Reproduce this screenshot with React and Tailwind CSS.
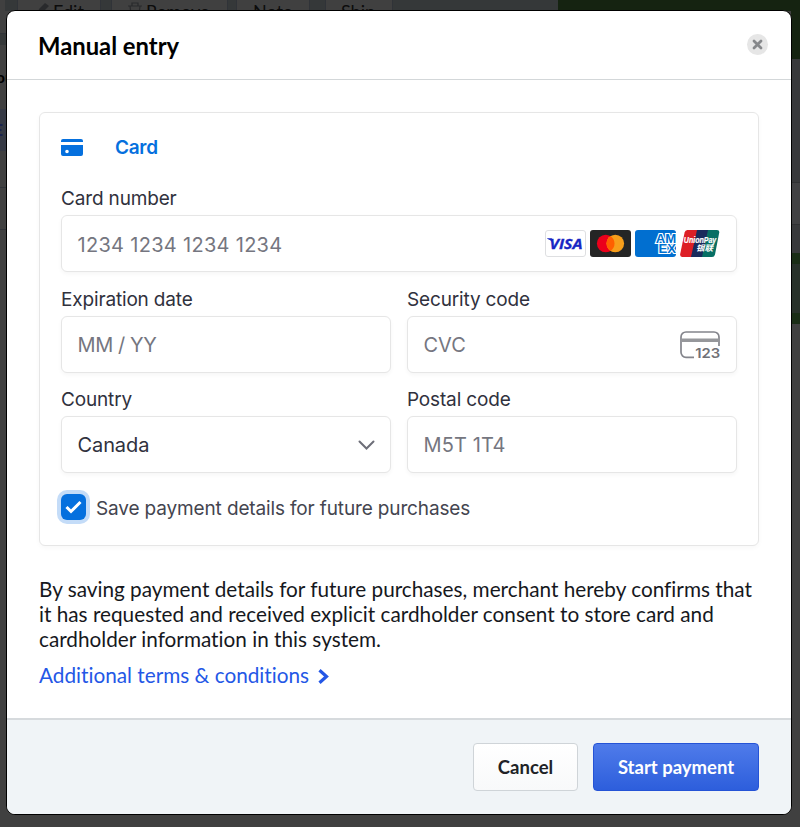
const toolbar = [
  { label: 'Edit', className: 'w-[84px] ml-[17px] pl-[20px]', icon: 'edit' },
  { label: 'Remove', className: 'w-[117px] ml-[10px] pl-[15px]', icon: 'trash' },
  { label: 'Note', className: 'w-[74px] ml-[8px] pl-[16px]' },
  { label: 'Ship', className: 'w-[68px] ml-[15px] pl-[15px]' },
];

function ToolbarIcon({ name }) {
  if (name === 'edit') {
    return (
      <svg className="h-4 w-3 shrink-0" viewBox="0 0 12 16" fill="#292a2c">
        <path d="M0 13l1-4 6-6 4 3-7 7z" />
      </svg>
    );
  }
  return (
    <svg className="h-4 w-4 shrink-0" viewBox="0 0 16 16" fill="none" stroke="#292a2c" strokeWidth="1.2">
      <path d="M1 6h14M5 6V3h6v3M3 6l1 9h8l1-9" />
    </svg>
  );
}

function PageBehind() {
  return (
    <div className="flex h-full flex-col bg-[#404040]">
      <div className="flex h-[11px] shrink-0 bg-[#353839]">
        <div className="h-full w-[5px] bg-[#404040]" />
        <div className="-ml-[5px] flex w-[558px]">
          {toolbar.map((item) => (
            <div
              key={item.label}
              className={`flex h-6 shrink-0 items-start gap-[3px] border-x border-[#303338] bg-[#404040] text-[18px] leading-[22px] text-[#0c0c0c] ${item.className}`}
            >
              {item.icon && <ToolbarIcon name={item.icon} />}
              <span>{item.label}</span>
            </div>
          ))}
        </div>
        <div className="h-full flex-1 bg-[#152311]" />
      </div>
      <div className="flex flex-1 justify-between">
        <div className="w-[7px] overflow-hidden text-base text-black">
          <div className="h-[23px] border-b border-[#303338]" />
          <div className="h-[11px] bg-[#353839]" />
          <div className="flex h-[64px] items-center justify-end font-bold">
            <span className="-mr-[7px]">ou</span>
          </div>
          <div className="flex h-[42px] items-center justify-end bg-[#363a45] font-black text-[#1a2250]">
            <span className="mr-[4px]">E</span>
          </div>
          <div className="h-[37px] border-b border-[#303338]" />
          <div className="h-[42px] border-b border-[#303338]" />
        </div>
        <div className="w-[9px]">
          <div className="h-[48px] bg-[#152311]" />
          <div className="h-[123px] bg-[#38393b]" />
          <div className="h-[43px] border-y border-[#303133] bg-[#414143]" />
          <div className="h-[28px] bg-[#38393b]" />
          <div className="h-[11px] bg-[#1a2d16]" />
          <div className="h-[49px] bg-[#28312a]" />
          <div className="h-[11px] bg-[#1a2d16]" />
        </div>
      </div>
    </div>
  );
}

function Visa() {
  return (
    <svg className="h-[27px] w-[41px]" viewBox="0 0 41 27">
      <rect x="0.5" y="0.5" width="40" height="26" rx="2.5" fill="#fff" stroke="#dedfe1" />
      <path d="M2.200 8.300h4.500l1.800 5.200Q6 9.800 2.200 8.800z" fill="#1726c4" />
      <text x="4.500" y="18.800" fontFamily="Open Sans, sans-serif" fontSize="14.8" fontWeight="700" fontStyle="italic" fill="#1726c4" stroke="#1726c4" strokeWidth="0.3" textLength="33" lengthAdjust="spacingAndGlyphs">
        VISA
      </text>
    </svg>
  );
}

function Mastercard() {
  return (
    <svg className="h-[27px] w-[41px]" viewBox="0 0 41 27">
      <rect width="41" height="27" rx="3" fill="#252525" />
      <circle cx="15.7" cy="13.5" r="8.8" fill="#eb001b" />
      <circle cx="25.3" cy="13.5" r="8.8" fill="#f79e1b" />
      <path d="M20.5 6.1a8.8 8.8 0 0 1 0 14.8a8.8 8.8 0 0 1 0-14.8" fill="#ff5f00" />
    </svg>
  );
}

function Amex() {
  return (
    <svg className="h-[27px] w-[41px]" viewBox="0 0 41 27">
      <defs>
        <clipPath id="amex">
          <rect width="41" height="27" rx="3" />
        </clipPath>
      </defs>
      <g clipPath="url(#amex)">
        <rect width="41" height="27" fill="#016fd0" />
        <g fontFamily="Liberation Sans, sans-serif" fontSize="12" fontWeight="700" fill="#0070d0" stroke="#fff" strokeWidth="2.200" paintOrder="stroke">
          <text x="20.800" y="13.200" textLength="20.500" lengthAdjust="spacingAndGlyphs">AM</text>
          <text x="23.500" y="22.600" textLength="17.500" lengthAdjust="spacingAndGlyphs">EX</text>
        </g>
      </g>
    </svg>
  );
}

function UnionPay() {
  return (
    <svg className="h-[27px] w-[41px]" viewBox="0 0 41 27">
      <path d="M7.4 0h12l-6 27H2Q-.2 27 .2 24L4.600 2.500Q5.200 0 7.400 0z" fill="#dd1f26" />
      <path d="M17 0h12l-6 27H11z" fill="#1a2b5c" />
      <path d="M28 0h9Q39.800 0 39.200 2.800L35 24.500Q34.400 27 32 27H22z" fill="#076f64" />
      <g fill="#fff" fontStyle="italic" fontWeight="700">
        <text x="3.800" y="13.200" fontFamily="Liberation Sans, sans-serif" fontSize="8.800" stroke="#fff" strokeWidth="0.2" textLength="32.500" lengthAdjust="spacingAndGlyphs">UnionPay</text>
        <text x="16" y="21.300" fontFamily="Noto Sans CJK SC, sans-serif" fontSize="8" textLength="17" lengthAdjust="spacingAndGlyphs">银联</text>
      </g>
    </svg>
  );
}

function CvcIcon() {
  return (
    <svg className="mt-[2px] h-[30px] w-[41px]" viewBox="0 0 41 30" fill="none" stroke="#84858c">
      <path d="M14 26.300H6a5 5 0 0 1-5-5V6a5 5 0 0 1 5-5h28a5 5 0 0 1 5 5v9" strokeWidth="1.7" />
      <path d="M1 9.300h38" strokeWidth="3.600" stroke="#96979b" />
      <text x="15.300" y="27.200" fontFamily="Inter, sans-serif" fontSize="12.800" fontWeight="600" fill="#707177" stroke="none" textLength="25" lengthAdjust="spacingAndGlyphs">
        123
      </text>
    </svg>
  );
}

function Field({ label, value, valueClass = 'text-[#757680]', children }) {
  return (
    <div className="min-w-0">
      <p className="h-[29px] whitespace-nowrap pt-px text-[19px] leading-6 tracking-[-0.16px] text-[#30313d]">{label}</p>
      <div className="flex h-[57px] items-center justify-between rounded-[6px] border border-[#e6e6e6] bg-white pl-[15.5px] pr-[15px] shadow-[0_2px_4px_rgba(0,0,0,0.04)]">
        <span className={`text-[20px] ${valueClass}`}>{value}</span>
        {children}
      </div>
    </div>
  );
}

function CardForm() {
  return (
    <section className="h-[434px] rounded-[6px] border border-[#e6e6e6] bg-white px-[21px] font-['Inter',sans-serif] shadow-[0_2px_5px_rgba(0,0,0,0.03)]">
      <div className="flex h-[73px] items-center gap-[32px] pb-[3px]">
        <svg className="mb-[2px] h-[17px] w-[22px]" viewBox="0 0 22 17" fill="#0570de">
          <path d="M0 3V2Q0 0 2 0h18q2 0 2 2v1z" />
          <path fillRule="evenodd" d="M0 6h22v9q0 2-2 2H2q-2 0-2-2zM6 10.700a1.800 1.800 0 1 0 0 3.600a1.800 1.800 0 1 0 0-3.600" />
        </svg>
        <span className="text-[19px] font-semibold tracking-[-0.3px] text-[#0570de]">Card</span>
      </div>
      <Field label="Card number" value="1234 1234 1234 1234" valueClass="pt-[2px] tracking-[0.3px] text-[#757680]">
        <div className="flex gap-1">
          <Visa />
          <Mastercard />
          <Amex />
          <UnionPay />
        </div>
      </Field>
      <div className="mt-[15px] grid grid-cols-2 gap-x-[16px] gap-y-[14px]">
        <Field label="Expiration date" value="MM / YY" valueClass="tracking-[-0.4px] text-[#757680]" />
        <Field label="Security code" value="CVC">
          <CvcIcon />
        </Field>
        <Field label="Country" value="Canada" valueClass="tracking-[-0.1px] text-[#30313d]">
          <svg className="mt-px h-[10px] w-[17px]" viewBox="0 0 17 10" fill="none" stroke="#6d6e78" strokeWidth="2" strokeLinecap="round">
            <path d="M1.500 1.500l7 7l7-7" />
          </svg>
        </Field>
        <Field label="Postal code" value="M5T 1T4" valueClass="tracking-[0.1px] text-[#757680]" />
      </div>
      <div className="mt-[21px] flex items-start gap-[10px]">
        <div className="flex h-[26px] w-[25px] items-center justify-center rounded-[6px] bg-[#0570de] shadow-[0_0_0_4px_#c4dcf8]">
          <svg className="h-[14px] w-[17px]" viewBox="0 0 17 14" fill="none" stroke="#fff" strokeWidth="3">
            <path d="M1.500 7l4.500 4.500L15.500 2" />
          </svg>
        </div>
        <span className="mt-px whitespace-nowrap text-[19px] leading-[28px] tracking-[-0.14px] text-[#44454f]">Save payment details for future purchases</span>
      </div>
    </section>
  );
}

export default function App() {
  return (
    <div className="relative h-[827px] w-[800px] overflow-hidden font-['Lato',sans-serif] [font-variant-ligatures:none]">
      <PageBehind />
      <div className="absolute left-[6px] top-[10px] flex h-[805px] w-[786px] flex-col overflow-hidden rounded-[9px] border border-black bg-white">
        <header className="flex h-[69px] shrink-0 items-center justify-between border-b border-[#d3d7d9] pl-[31px] pr-[23px]">
          <h1 className="pt-[3px] text-[23.8px] font-bold text-black">Manual entry</h1>
          <button className="mb-px flex h-[21px] w-[21px] items-center justify-center rounded-full bg-[#e6e6e6]" aria-label="Close">
            <svg className="h-[11px] w-[11px]" viewBox="0 0 11 11" fill="none" stroke="#86888b" strokeWidth="2.800" strokeLinecap="round">
              <path d="M2 2l7 7M9 2l-7 7" />
            </svg>
          </button>
        </header>
        <main className="flex-1 px-8 pt-8">
          <CardForm />
          <p className="mt-[31px] whitespace-nowrap text-[20.75px] leading-[25px] text-[#16181d]">
            By saving payment details for future purchases, merchant hereby confirms that
            <br />
            it has requested and received explicit cardholder consent to store card and
            <br />
            cardholder information in this system.
          </p>
          <a className="mt-[10px] flex items-center gap-[9px] text-[20.75px] leading-[26px] text-[#2457e6]">
            Additional terms &amp; conditions
            <svg className="mt-[3px] h-[15px] w-[11px]" viewBox="0 0 11 15" fill="none" stroke="#2457e6" strokeWidth="3.200">
              <path d="M1.500 1.200l7 6.300l-7 6.300" />
            </svg>
          </a>
        </main>
        <footer className="flex h-[96px] shrink-0 justify-end gap-[15px] border-t-2 border-[#d6dadd] bg-[#f0f4f7] pr-8 pt-[23px]">
          <button className="h-[48px] w-[105px] rounded-[4px] border border-[#cfd4d8] bg-gradient-to-b from-white to-[#f8f9fa] pt-[2px] text-[18.5px] font-bold text-[#202226]">
            Cancel
          </button>
          <button className="h-[48px] w-[166px] rounded-[4px] border border-[#2553d6] bg-gradient-to-b from-[#4f7bea] to-[#2d5edc] pt-[2px] text-[18.5px] font-bold text-white">
            Start payment
          </button>
        </footer>
      </div>
    </div>
  );
}
